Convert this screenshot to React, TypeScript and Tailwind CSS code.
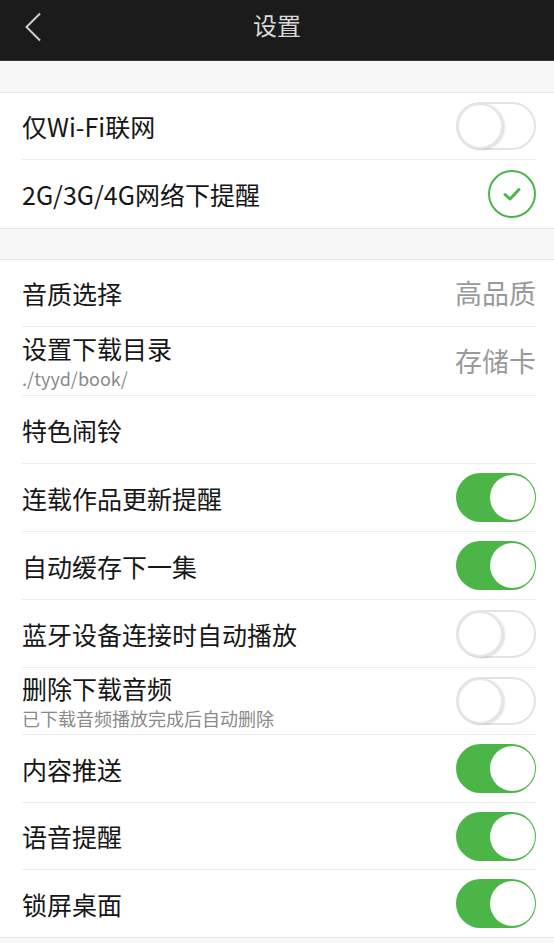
import React from "react";

const font = { fontFamily: '"Noto Sans CJK SC", "Noto Sans", sans-serif' };

function ToggleOn() {
  return (
    <div className="relative w-[80px] h-[49px] rounded-full bg-[#4cb548] shrink-0">
      <div className="absolute right-[1px] top-[2px] w-[45px] h-[45px] rounded-full bg-white" />
    </div>
  );
}

function ToggleOff() {
  return (
    <div className="relative w-[80px] h-[48px] rounded-full bg-white border-2 border-[#e3e3e3] shrink-0">
      <div className="absolute left-[-1px] top-[-1px] w-[46px] h-[46px] rounded-full bg-white border-2 border-[#e6e6e6] shadow-[2px_1px_2px_rgba(0,0,0,0.12)]" />
    </div>
  );
}

function Check() {
  return (
    <div className="w-[48px] h-[48px] rounded-full border-2 border-[#4cb548] flex items-center justify-center shrink-0">
      <svg width="20" height="16" viewBox="0 0 20 16" fill="none">
        <path d="M3 8.5 L8 13 L17 3.5" stroke="#4cb548" strokeWidth="3" strokeLinecap="round" strokeLinejoin="round" />
      </svg>
    </div>
  );
}

type Row = {
  label: string;
  sub?: string;
  right?: React.ReactNode;
  h: string;
};

function Item({ row, last }: { row: Row; last?: boolean }) {
  return (
    <div className={`${row.h} pl-[22px] pr-[18px] flex`}>
      <div className={`flex-1 flex items-center justify-between ${last ? "" : "border-b border-[#ececec]"}`}>
        <div className="flex flex-col">
          <div className={`text-[25px] text-[#161616] ${row.sub ? "leading-[30px]" : "leading-[32px]"}`}>{row.label}</div>
          {row.sub && <div className="text-[18px] leading-[22px] text-[#8a8a8a] mt-[4px]">{row.sub}</div>}
        </div>
        {row.right}
      </div>
    </div>
  );
}

function Gray({ text }: { text: string }) {
  return <div className="text-[27px] text-[#9a9a9a] leading-[32px]">{text}</div>;
}

export default function App() {
  const group1: Row[] = [
    { label: "仅Wi-Fi联网", right: <ToggleOff />, h: "h-[67px]" },
    { label: "2G/3G/4G网络下提醒", right: <Check />, h: "h-[68px]" },
  ];
  const group2: Row[] = [
    { label: "音质选择", right: <Gray text="高品质" />, h: "h-[67px]" },
    { label: "设置下载目录", sub: "./tyyd/book/", right: <Gray text="存储卡" />, h: "h-[69px]" },
    { label: "特色闹铃", h: "h-[68px]" },
    { label: "连载作品更新提醒", right: <ToggleOn />, h: "h-[68px]" },
    { label: "自动缓存下一集", right: <ToggleOn />, h: "h-[68px]" },
    { label: "蓝牙设备连接时自动播放", right: <ToggleOff />, h: "h-[68px]" },
    { label: "删除下载音频", sub: "已下载音频播放完成后自动删除", right: <ToggleOff />, h: "h-[67px]" },
    { label: "内容推送", right: <ToggleOn />, h: "h-[68px]" },
    { label: "语音提醒", right: <ToggleOn />, h: "h-[67px]" },
    { label: "锁屏桌面", right: <ToggleOn />, h: "h-[67px]" },
  ];
  return (
    <div className="w-[554px] h-[943px] bg-[#f7f7f7] overflow-hidden" style={font}>
      <div className="h-[61px] bg-[#1b1b1b] border-b border-[#3a3a3a] relative flex items-center justify-center">
        <svg className="absolute left-[24px] top-[12px]" width="18" height="30" viewBox="0 0 18 30" fill="none">
          <path d="M16 1.5 L2.5 15 L16 28.5" stroke="#cfcfcf" strokeWidth="2" />
        </svg>
        <div className="text-[24px] text-[#d9d9d9] leading-[30px] -mt-[10px]">设置</div>
      </div>
      <div className="h-[31px]" />
      <div className="bg-white border-t border-b border-[#e6e6e6]">
        {group1.map((r, i) => (
          <Item key={i} row={r} last={i === group1.length - 1} />
        ))}
      </div>
      <div className="h-[30px]" />
      <div className="bg-white border-t border-b border-[#e6e6e6]">
        {group2.map((r, i) => (
          <Item key={i} row={r} last={i === group2.length - 1} />
        ))}
      </div>
    </div>
  );
}
